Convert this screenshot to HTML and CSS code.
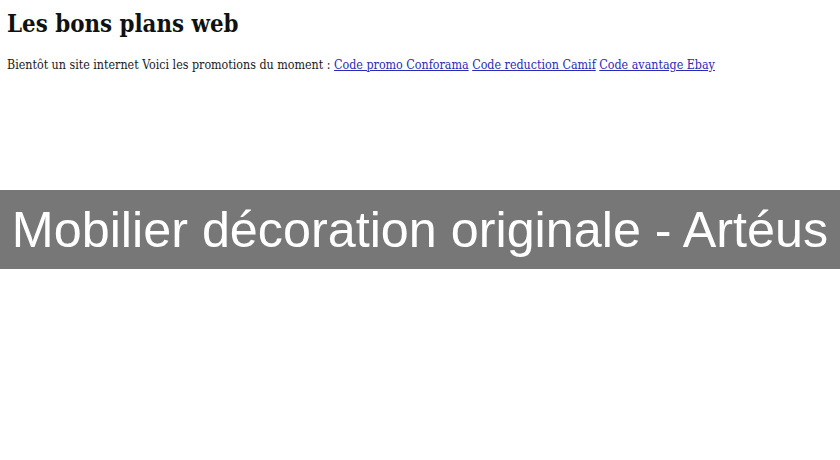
FILE: index.html
```html
<!DOCTYPE html>
<html lang="fr">
<head>
<meta charset="utf-8">
<title>Les bons plans web</title>
<link rel="stylesheet" href="styles.css">
</head>
<body>
<div class="page">
  <h1 class="title">Les bons plans web</h1>
  <p class="intro">Bientôt un site internet Voici les promotions du moment : <a href="#">Code promo Conforama</a> <a href="#">Code reduction Camif</a> <a href="#">Code avantage Ebay</a></p>
</div>
<div class="band">Mobilier décoration originale - Artéus</div>
</body>
</html>
```
FILE: styles.css
```css
html, body {
  margin: 0;
  padding: 0;
  background: #fff;
}
.page {
  padding: 9px 7px 0;
  height: 190px;
  box-sizing: border-box;
}
.title {
  margin: 0;
  font-family: "DejaVu Serif Condensed", "DejaVu Serif", serif;
  font-weight: bold;
  font-size: 23.8px;
  line-height: 30px;
  color: #111;
}
.intro {
  margin: 18px 0 0;
  font-family: "DejaVu Serif Condensed", "DejaVu Serif", serif;
  font-size: 12.36px;
  line-height: 16px;
  color: #1a1a1a;
}
.intro a {
  color: #2a2ab8;
}
.band {
  background: #777;
  height: 79px;
  display: flex;
  align-items: center;
  justify-content: center;
  font-family: "Liberation Sans", Arial, sans-serif;
  font-size: 50.3px;
  color: #fff;
}
```
